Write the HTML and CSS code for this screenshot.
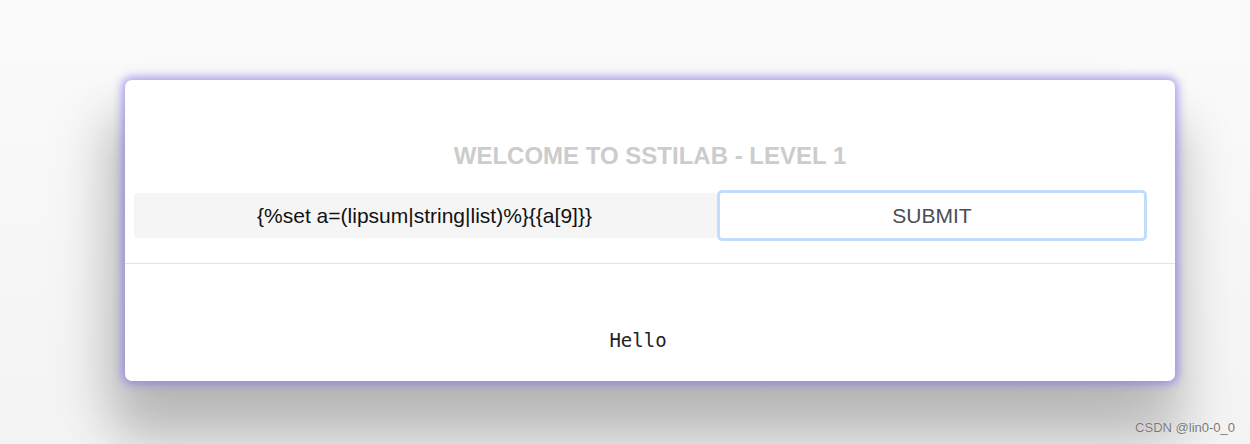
FILE: index.html
```html
<!DOCTYPE html>
<html>
<head>
  <title>SSTILAB</title>
  <link rel="stylesheet" href="styles.css">
</head>
<body>
  <div class="card">
    <h1>WELCOME TO SSTILAB - LEVEL 1</h1>
    <form class="row">
      <input type="text" class="code" value="{%set a=(lipsum|string|list)%}{{a[9]}}">
      <button type="button" class="submit">SUBMIT</button>
    </form>
    <hr class="line">
    <div class="result">Hello</div>
  </div>
  <div class="mark">CSDN @lin0-0_0</div>
</body>
</html>
```

FILE: styles.css
```css
html, body {
  margin: 0;
  height: 100%;
}
body {
  background: linear-gradient(#fbfbfb, #f3f3f3);
  font-family: "Liberation Sans", Arial, sans-serif;
  padding-top: 80px;
  box-sizing: border-box;
  overflow: hidden;
}
.card {
  width: 1050px;
  margin-left: 125px;
  background: #fff;
  border-radius: 7px;
  box-shadow: 0 0 10px 3px rgba(125, 110, 235, 0.65), 0 50px 50px 10px rgba(0, 0, 0, 0.2), -30px 30px 60px rgba(0, 0, 0, 0.08);
  padding-top: 64px;
  height: 301px;
  box-sizing: border-box;
}
h1 {
  margin: 0;
  text-align: center;
  color: #cccccc;
  font-size: 24px;
  font-weight: bold;
  line-height: 24px;
}
.row {
  display: flex;
  align-items: center;
  margin: 22px 0 0 9px;
  width: 1013px;
}
.code {
  width: 583px;
  height: 45px;
  box-sizing: border-box;
  border: none;
  border-radius: 4px;
  background: #f5f5f5;
  font-family: "Liberation Sans", Arial, sans-serif;
  font-size: 21px;
  color: #111;
  text-align: center;
  padding-right: 4px;
  outline: none;
}
.submit {
  width: 430px;
  height: 51px;
  box-sizing: border-box;
  border: 3px solid #c3dcfa;
  border-radius: 5px;
  background: #fff;
  color: #4a4d55;
  font-family: "Liberation Sans", Arial, sans-serif;
  font-size: 21px;
}
.line {
  border: none;
  border-top: 1px solid #e3e3e3;
  margin: 22px 0 0;
}
.result {
  text-align: center;
  font-family: "DejaVu Sans Mono", monospace;
  font-size: 19px;
  color: #222;
  margin-top: 65px;
  padding-right: 24px;
}
.mark {
  position: absolute;
  right: 15px;
  bottom: 9px;
  font-size: 13px;
  color: #777;
  text-shadow: 0 0 1px #fff;
}
```
